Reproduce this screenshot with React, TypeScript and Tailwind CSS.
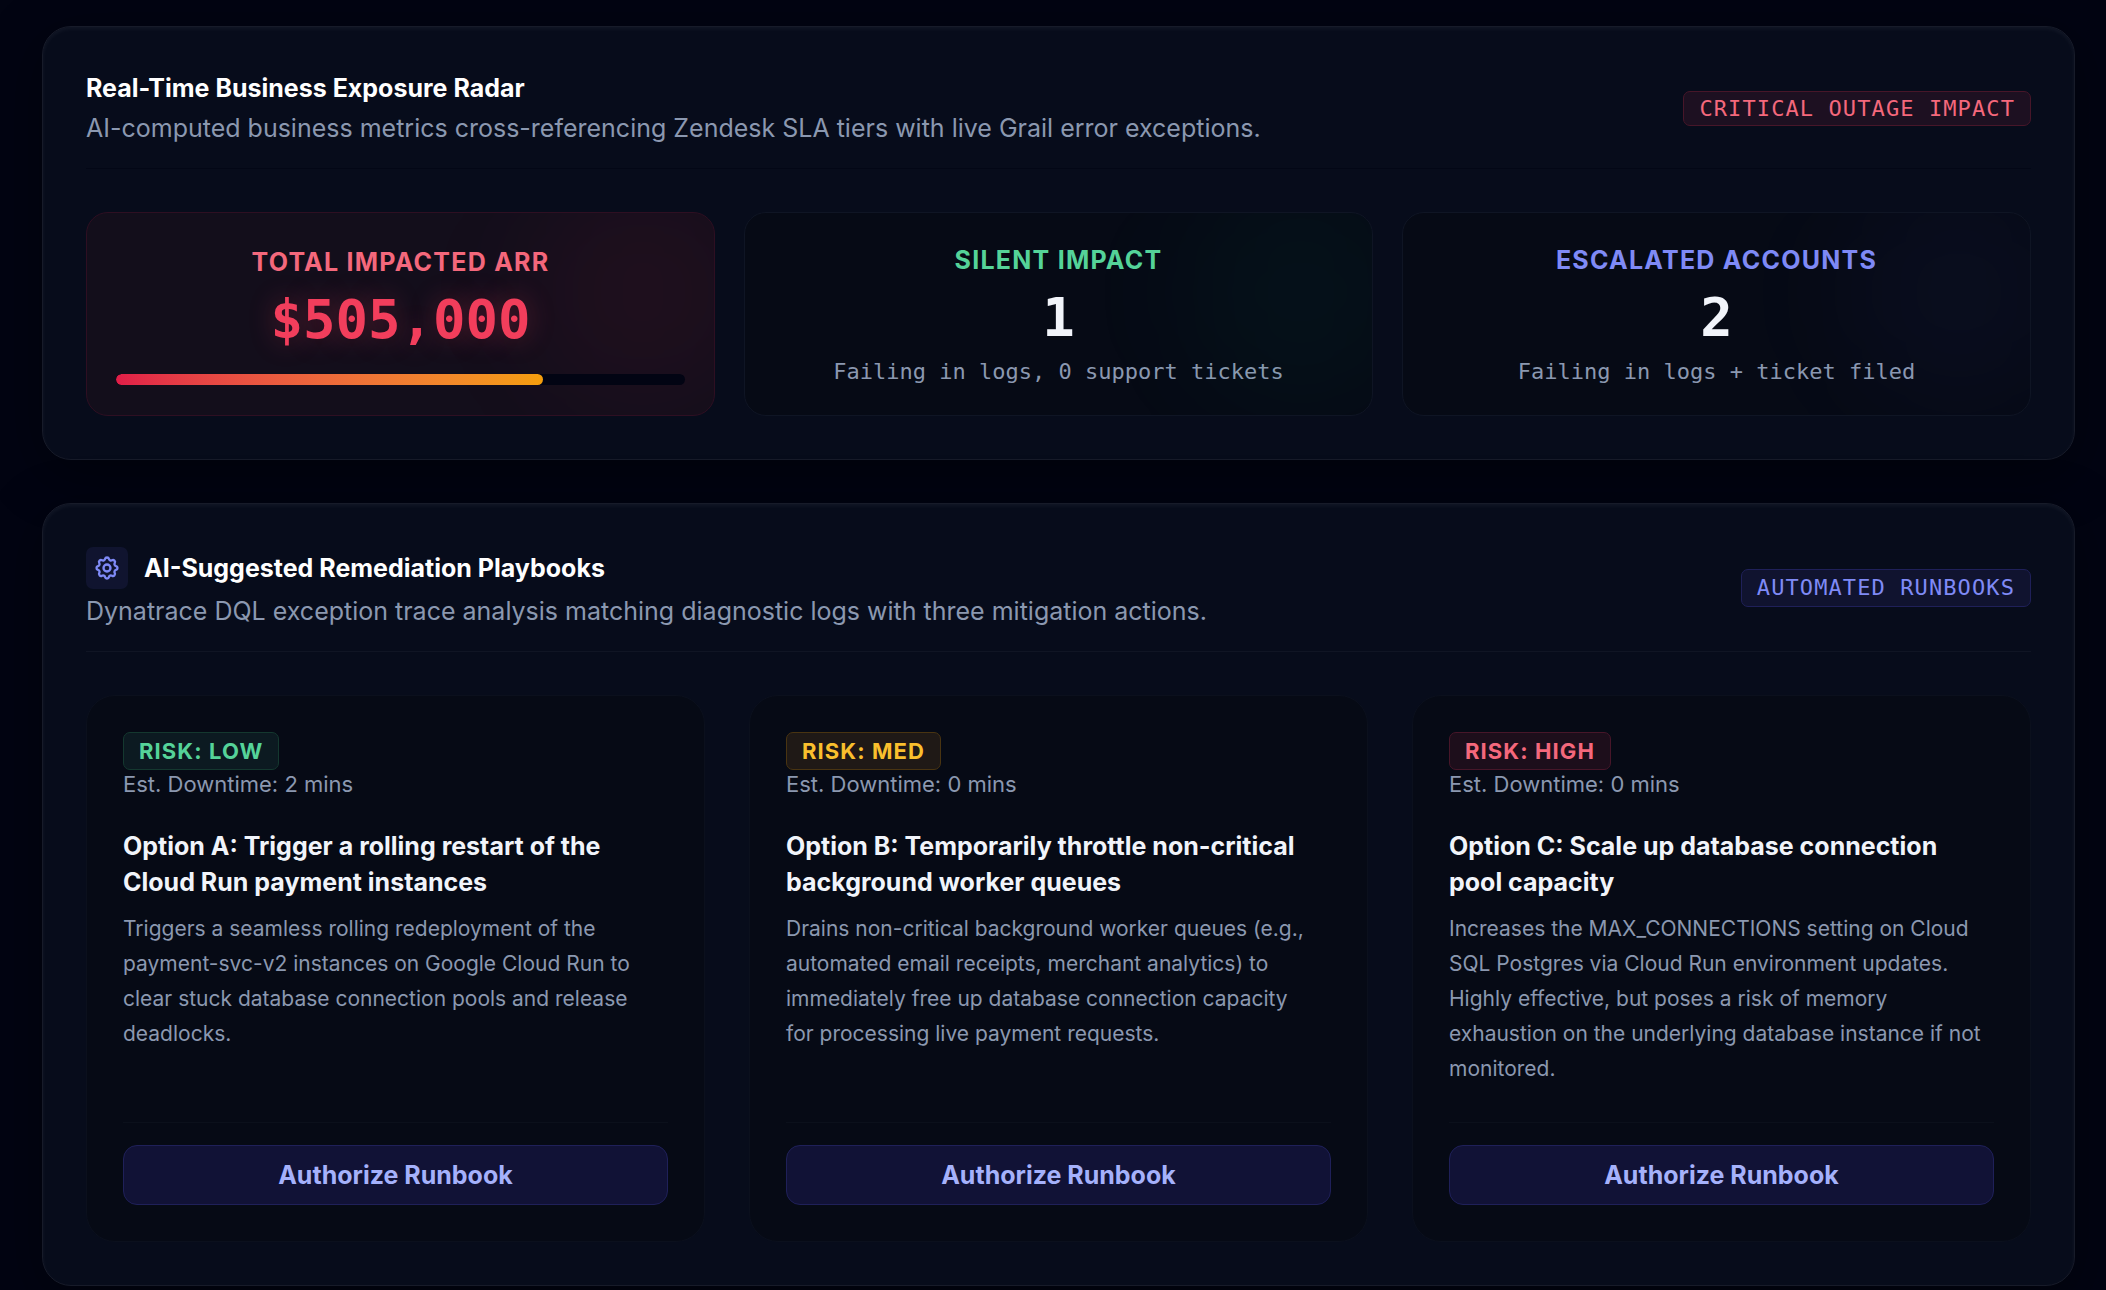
import type { ReactNode } from "react";
import clsx from "clsx";

interface Metric {
  label: string;
  value: string;
  note?: string;
  progress?: number;
  tile: string;
  glow: string;
  labelColor: string;
  valueColor: string;
}

const METRICS: Metric[] = [
  {
    label: "Total Impacted ARR",
    value: "$505,000",
    progress: 75,
    tile: "border-[#2e0f22] bg-[#130e1b]",
    glow: "bg-rose-500/5",
    labelColor: "text-[#f4687c]",
    valueColor: "text-[#f23e5c] [text-shadow:0_0_28px_rgba(244,63,94,0.3)]",
  },
  {
    label: "Silent Impact",
    value: "1",
    note: "Failing in logs, 0 support tickets",
    tile: "border-[#0f1524] bg-[#060a15]",
    glow: "bg-emerald-500/4",
    labelColor: "text-[#55d399]",
    valueColor: "text-[#f1f4fa]",
  },
  {
    label: "Escalated Accounts",
    value: "2",
    note: "Failing in logs + ticket filed",
    tile: "border-[#0f1524] bg-[#060a15]",
    glow: "bg-indigo-500/4",
    labelColor: "text-[#7f8af6]",
    valueColor: "text-[#f1f4fa]",
  },
];

interface Playbook {
  risk: string;
  riskStyle: string;
  downtime: string;
  title: string;
  body: string;
}

const PLAYBOOKS: Playbook[] = [
  {
    risk: "Low",
    riskStyle: "border-[#14382f] bg-[#0c1a21] text-[#55d399]",
    downtime: "2 mins",
    title: "Option A: Trigger a rolling restart of the Cloud Run payment instances",
    body: "Triggers a seamless rolling redeployment of the payment-svc-v2 instances on Google Cloud Run to clear stuck database connection pools and release deadlocks.",
  },
  {
    risk: "Med",
    riskStyle: "border-[#493411] bg-[#1f1916] text-[#f9bf2d]",
    downtime: "0 mins",
    title: "Option B: Temporarily throttle non-critical background worker queues",
    body: "Drains non-critical background worker queues (e.g., automated email receipts, merchant analytics) to immediately free up database connection capacity for\u00a0processing live payment requests.",
  },
  {
    risk: "High",
    riskStyle: "border-[#471629] bg-[#1d0e1b] text-[#f4687c]",
    downtime: "0 mins",
    title: "Option C: Scale up database connection pool\u00a0capacity",
    body: "Increases the MAX_CONNECTIONS setting on Cloud SQL Postgres via Cloud Run environment updates. Highly effective, but poses a risk of memory exhaustion on the underlying database instance if not monitored.",
  },
];

const MONO = "font-['DejaVu_Sans_Mono','Liberation_Mono',monospace]";

function CogIcon() {
  return (
    <svg
      viewBox="0 0 24 24"
      fill="none"
      stroke="currentColor"
      strokeWidth={2}
      strokeLinecap="round"
      strokeLinejoin="round"
      className="size-7"
      aria-hidden="true"
    >
      <path d="M10.325 4.317c.426-1.756 2.924-1.756 3.35 0a1.724 1.724 0 002.573 1.066c1.543-.94 3.31.826 2.37 2.37a1.724 1.724 0 001.065 2.572c1.756.426 1.756 2.924 0 3.35a1.724 1.724 0 00-1.066 2.573c.94 1.543-.826 3.31-2.37 2.37a1.724 1.724 0 00-2.572 1.065c-.426 1.756-2.924 1.756-3.35 0a1.724 1.724 0 00-2.573-1.066c-1.543.94-3.31-.826-2.37-2.37a1.724 1.724 0 00-1.065-2.572c-1.756-.426-1.756-2.924 0-3.35a1.724 1.724 0 001.066-2.573c-.94-1.543.826-3.31 2.37-2.37.996.608 2.296.07 2.572-1.065z" />
      <path d="M15 12a3 3 0 11-6 0 3 3 0 016 0z" />
    </svg>
  );
}

function Panel({ children }: { children: ReactNode }) {
  return (
    <section className="rounded-[29px] border border-[#171b29] bg-[#070c1b] p-[43px] shadow-[0_14px_56px_rgba(0,0,0,0.37),inset_0_2px_4px_rgba(255,255,255,0.05)]">
      {children}
    </section>
  );
}

interface PanelHeaderProps {
  title: string;
  subtitle: string;
  badge: string;
  badgeStyle: string;
  divider: string;
  icon?: ReactNode;
}

function PanelHeader({ title, subtitle, badge, badgeStyle, divider, icon }: PanelHeaderProps) {
  return (
    <header className={clsx("mb-[43px] flex items-center justify-between border-b pb-[22px]", divider)}>
      <div>
        <div className="flex items-center gap-4">
          {icon && <span className="rounded-[7px] bg-[#10142f] p-[7px] text-[#7f8af6]">{icon}</span>}
          <h2 className="text-[25px] leading-9 font-bold text-white">{title}</h2>
        </div>
        <p className="mt-1 text-[25px] leading-9 text-[#8b98b0]">{subtitle}</p>
      </div>
      <span
        className={clsx(
          "rounded-[7px] border px-[15px] text-[22px] tracking-wider uppercase",
          MONO,
          badgeStyle,
        )}
      >
        {badge}
      </span>
    </header>
  );
}

function MetricTile({ metric }: { metric: Metric }) {
  return (
    <div
      className={clsx(
        "relative flex flex-col justify-center overflow-hidden rounded-[22px] border p-[29px] text-center",
        metric.tile,
      )}
    >
      <div className={clsx("absolute -top-9 -right-11 size-[230px] rounded-full blur-[56px]", metric.glow)} />
      <h3 className={clsx("text-[25px] leading-9 font-bold tracking-wider uppercase", metric.labelColor)}>
        {metric.label}
      </h3>
      <p className={clsx("mt-[7px] text-[54px] leading-[65px] font-bold", MONO, metric.valueColor)}>
        {metric.value}
      </p>
      {metric.note && (
        <p className={clsx("mt-[7px] text-[22px] leading-[29px] text-[#8b98b0]", MONO)}>{metric.note}</p>
      )}
      {metric.progress && (
        <div className="relative mt-[22px] h-[11px] overflow-hidden rounded-full bg-[#020413]">
          <div
            className="h-full rounded-full bg-linear-to-r from-[#e11d48] to-[#f59e0b]"
            style={{ width: `${metric.progress}%` }}
          />
        </div>
      )}
    </div>
  );
}

function PlaybookCard({ playbook }: { playbook: Playbook }) {
  return (
    <article className="flex flex-col rounded-[29px] border border-[#0b101d] bg-[#060a15] p-9">
      <div>
        <span
          className={clsx(
            "inline-block rounded-[7px] border px-[15px] text-[22px] leading-9 font-bold tracking-wider uppercase",
            playbook.riskStyle,
          )}
        >
          Risk: {playbook.risk}
        </span>
        <p className="text-[22px] leading-[29px] text-[#8b98b0]">Est. Downtime: {playbook.downtime}</p>
      </div>
      <h3 className="mt-[29px] text-[25px] leading-9 font-bold text-[#f1f4fa]">{playbook.title}</h3>
      <p className="mt-[11px] text-[21px] leading-[35px] text-[#8b98b0]">{playbook.body}</p>
      <div className="mt-auto pt-9">
        <div className="border-t border-[#0b101b] pt-[22px]">
          <button
            type="button"
            className="w-full rounded-[14px] border border-[#1f2059] bg-[#111236] py-[11px] text-[25px] leading-9 font-bold text-[#a5b1fb] hover:bg-[#181a4a]"
          >
            Authorize Runbook
          </button>
        </div>
      </div>
    </article>
  );
}

export default function App() {
  return (
    <main className="flex min-h-screen flex-col gap-[43px] bg-[#020412] pt-[26px] pr-[31px] pl-[42px] font-[Inter,'Liberation_Sans',sans-serif]">
      <Panel>
        <PanelHeader
          title="Real-Time Business Exposure Radar"
          subtitle="AI-computed business metrics cross-referencing Zendesk SLA tiers with live Grail error exceptions."
          badge="Critical Outage Impact"
          badgeStyle="border-[#471629] bg-[#1d1021] text-[#f4687c] leading-[33px]"
          divider="border-[#030716]"
        />
        <div className="grid grid-cols-3 gap-[29px]">
          {METRICS.map((m) => (
            <MetricTile key={m.label} metric={m} />
          ))}
        </div>
      </Panel>
      <Panel>
        <PanelHeader
          title="AI-Suggested Remediation Playbooks"
          subtitle="Dynatrace DQL exception trace analysis matching diagnostic logs with three mitigation actions."
          badge="Automated Runbooks"
          badgeStyle="border-[#1f2059] bg-[#10132f] text-[#7f8af6] leading-9"
          divider="border-[#101524]"
          icon={<CogIcon />}
        />
        <div className="grid grid-cols-3 gap-11">
          {PLAYBOOKS.map((p) => (
            <PlaybookCard key={p.risk} playbook={p} />
          ))}
        </div>
      </Panel>
    </main>
  );
}
